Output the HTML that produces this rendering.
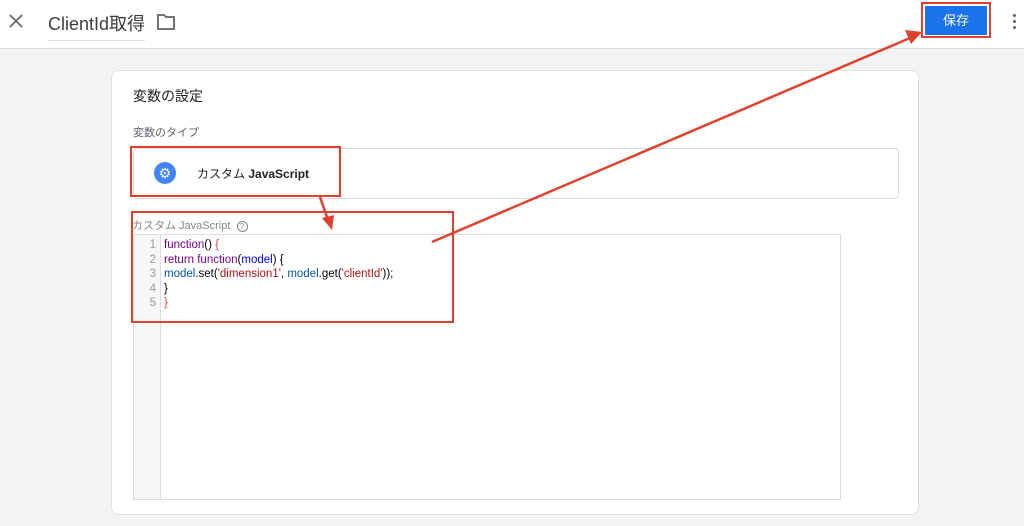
<!DOCTYPE html>
<html><head><meta charset="utf-8"><style>
body{margin:0;width:1024px;height:526px;background:#f1f3f4;font-family:"Liberation Sans","Noto Sans CJK JP",sans-serif;position:relative;overflow:hidden}
.hdr{position:absolute;left:0;top:0;width:1024px;height:48px;background:#fff;border-bottom:1px solid #dadce0}
.abs{position:absolute}
.card{position:absolute;left:111px;top:70px;width:808px;height:445px;background:#fff;border-radius:8px;border:1px solid #e0e0e0;box-sizing:border-box}
.code{font-size:11.5px;line-height:14.5px}
</style></head><body>
<div class="hdr"></div>
<svg class="abs" style="left:9px;top:14px" width="14" height="14" viewBox="0 0 14 14"><path d="M1 1L13 13M13 1L1 13" stroke="#5f6368" stroke-width="1.6"/></svg>
<div class="abs" style="left:48px;top:10px;font-size:18px;color:#3c4043;border-bottom:1px solid #dadce0;padding-bottom:4px">ClientId取得</div>
<svg class="abs" style="left:156px;top:13px" width="20" height="18" viewBox="0 0 20 18"><path d="M2 2h6l2 2h8v12H2z" fill="none" stroke="#5f6368" stroke-width="1.8"/></svg>
<div class="abs" style="left:921px;top:2px;width:70px;height:36px;border:2px solid #e0412e;box-sizing:border-box;background:#fff"></div>
<div class="abs" style="left:925px;top:6px;width:62px;height:29px;background:#1a73e8;color:#fff;font-size:13px;text-align:center;line-height:29px">保存</div>
<div class="abs" style="left:1013px;top:14px;width:3px;height:3px;background:#5f6368;border-radius:2px;box-shadow:0 6px #5f6368,0 12px #5f6368"></div>
<div class="card"></div>
<div class="abs" style="left:133px;top:86px;font-size:14px;color:#202124">変数の設定</div>
<div class="abs" style="left:133px;top:124px;font-size:11px;color:#5f6368">変数のタイプ</div>
<div class="abs" style="left:133px;top:148px;width:766px;height:51px;border:1px solid #dadce0;border-radius:4px;box-sizing:border-box"></div>
<div class="abs" style="left:154px;top:162px;width:22px;height:22px;border-radius:50%;background:#4285f4;color:#fff;font-size:14px;text-align:center;line-height:22px">⚙</div>
<div class="abs" style="left:197px;top:165px;font-size:12px;color:#202124">カスタム <b>JavaScript</b></div>
<div class="abs" style="left:130px;top:146px;width:211px;height:51px;border:2px solid #e0412e;box-sizing:border-box"></div>
<div class="abs" style="left:132px;top:217px;font-size:11px;color:#80868b">カスタム JavaScript &nbsp;<span style="display:inline-block;width:9px;height:9px;border:1.3px solid #80868b;border-radius:50%;font-size:8px;line-height:9px;text-align:center">?</span></div>
<div class="abs" style="left:133px;top:234px;width:708px;height:266px;border:1px solid #dadce0;background:#fff;box-sizing:border-box"></div>
<div class="abs" style="left:134px;top:235px;width:26px;height:264px;background:#f7f7f7;border-right:1px solid #ddd"></div>
<div class="abs code" style="left:134px;top:238px;width:22px;text-align:right;color:#999">1<br>2<br>3<br>4<br>5</div>
<div class="abs code" style="left:164px;top:238px;color:#000;white-space:pre"><span style="color:#770088">function</span>() <span style="color:#e0412e;text-decoration:underline">{</span>
<span style="color:#770088">return function</span>(<span style="color:#0000ff">model</span>) {
<span style="color:#0055aa">model</span>.set(<span style="color:#aa1111">'dimension1'</span>, <span style="color:#0055aa">model</span>.get(<span style="color:#aa1111">'clientId'</span>));
}
<span style="color:#e0412e;text-decoration:underline">}</span></div>
<div class="abs" style="left:131px;top:211px;width:323px;height:112px;border:2px solid #e0412e;box-sizing:border-box"></div>
<svg class="abs" style="left:0;top:0" width="1024" height="526">
<line x1="320" y1="197" x2="328" y2="220" stroke="#e0412e" stroke-width="2.5"/>
<polygon points="322,218 334,215 332,230" fill="#e0412e"/>
<line x1="432" y1="242" x2="910" y2="38" stroke="#e0412e" stroke-width="2.5"/>
<polygon points="922,32 905,30 911,44" fill="#e0412e"/>
</svg>
</body></html>
